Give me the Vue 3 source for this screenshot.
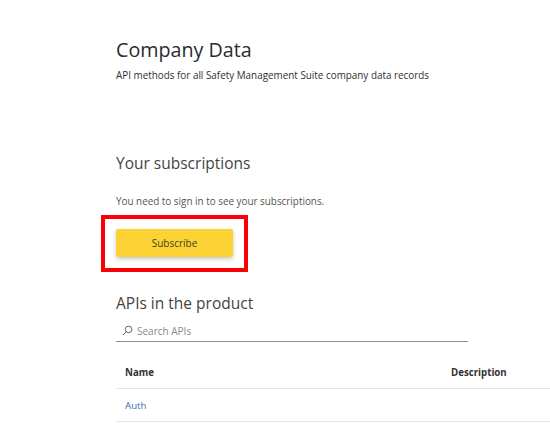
<script setup>
import { ref } from 'vue'

const search = ref('')
const apis = [{ name: 'Auth', description: '' }]
</script>

<template>
  <div class="page">
    <section class="intro">
      <h1>Company Data</h1>
      <p>API methods for all Safety Management Suite company data records</p>
    </section>

    <section class="subscriptions">
      <h2>Your subscriptions</h2>
      <p>You need to sign in to see your subscriptions.</p>
      <div class="subscribe-wrap">
        <button type="button" class="subscribe-btn">Subscribe</button>
        <span class="callout" aria-hidden="true"></span>
      </div>
    </section>

    <section class="apis">
      <h2>APIs in the product</h2>
      <label class="search">
        <svg viewBox="0 0 12 12" width="11" height="11" aria-hidden="true">
          <circle cx="7.2" cy="4.8" r="3.6" fill="none" stroke="#555" stroke-width="1" />
          <path d="M4.6 7.4 1 11" fill="none" stroke="#555" stroke-width="1" />
        </svg>
        <input v-model="search" type="text" placeholder="Search APIs">
      </label>

      <div class="table">
        <div class="row head">
          <span class="name">Name</span>
          <span class="description">Description</span>
        </div>
        <div v-for="api in apis" :key="api.name" class="row">
          <a class="name" href="#" @click.prevent>{{ api.name }}</a>
          <span class="description">{{ api.description }}</span>
        </div>
      </div>
    </section>
  </div>
</template>

<style scoped>
.page {
  width: 550px;
  height: 423px;
  box-sizing: border-box;
  padding: 38px 0 0 116px;
  overflow: hidden;
  background: #fff;
  font-family: "Open Sans", "Liberation Sans", sans-serif;
  color: #333;
}

h1 {
  margin: 0;
  font-size: 19.7px;
  line-height: 24px;
  font-weight: 400;
  color: #2b2b33;
}

h2 {
  margin: 0;
  font-size: 15.5px;
  line-height: 22px;
  font-weight: 400;
  color: #444;
}

.intro p {
  margin: 6px 0 0;
  font-size: 9.9px;
  line-height: 14px;
  color: #2f2f2f;
}

.subscriptions {
  margin-top: 70px;
}

.subscriptions p {
  margin: 20px 0 0;
  font-size: 9.9px;
  line-height: 14px;
  color: #555;
}

.subscribe-wrap {
  position: relative;
  width: 117px;
  margin-top: 21px;
}

.subscribe-btn {
  display: block;
  width: 117px;
  height: 28px;
  padding: 0;
  border: none;
  border-radius: 2px;
  background: #fdd235;
  box-shadow: 0 2px 4px rgba(0, 0, 0, 0.22);
  font-family: inherit;
  font-size: 10px;
  color: #4a4020;
}

/* red box drawn over the screenshot */
.callout {
  position: absolute;
  left: -15px;
  top: -14px;
  width: 147px;
  height: 57px;
  box-sizing: border-box;
  border: 4px solid #fb0007;
}

.apis {
  margin-top: 35px;
}

.search {
  display: flex;
  align-items: center;
  gap: 4px;
  width: 352px;
  height: 22px;
  box-sizing: border-box;
  margin-top: 6px;
  padding-left: 6px;
  border-bottom: 1px solid #8f8f8f;
}

.search input {
  flex: 1;
  min-width: 0;
  padding: 0;
  border: none;
  outline: none;
  background: transparent;
  font-family: inherit;
  font-size: 10px;
  color: #333;
}

.search input::placeholder {
  color: #8a8a8a;
  opacity: 1;
}

.table {
  width: 434px;
  margin-top: 15px;
}

.row {
  display: flex;
  align-items: center;
  height: 32px;
  border-bottom: 1px solid #e6e6e6;
  font-size: 9.7px;
}

.row.head {
  height: 31px;
  font-weight: 700;
  color: #333;
}

.name {
  width: 326px;
  padding-left: 9px;
}

a.name {
  color: #3b6fb0;
  text-decoration: none;
}
</style>
